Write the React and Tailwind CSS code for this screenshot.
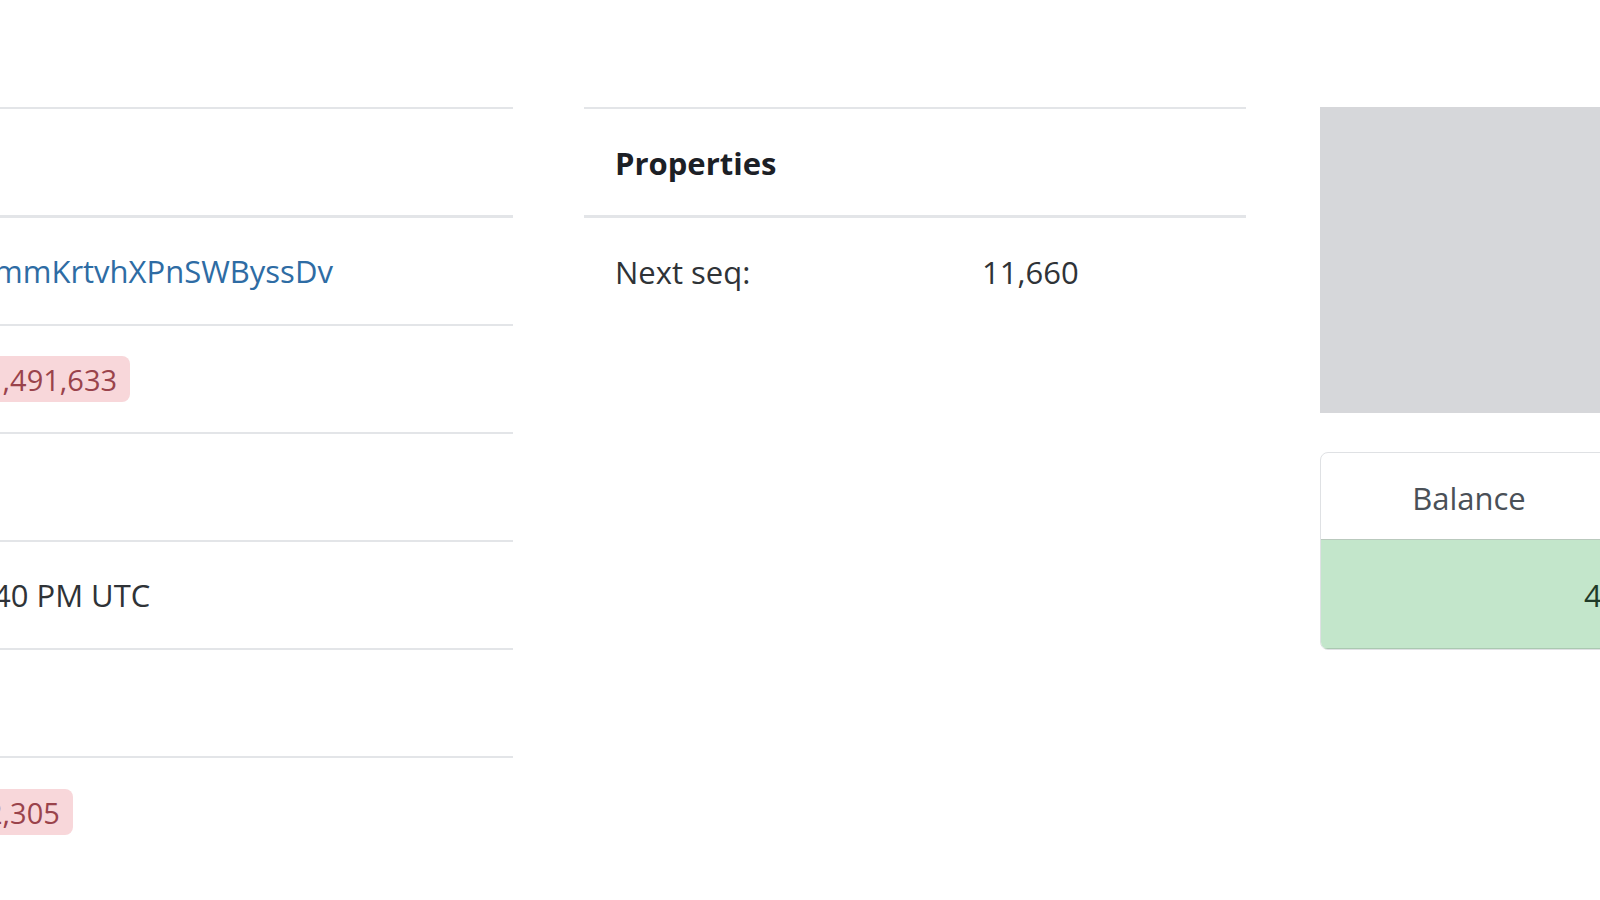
const font = { fontFamily: '"Open Sans", "Noto Sans", sans-serif' };

const Row = ({ children, last }) => (
  <div
    className={`grid grid-cols-[343px_1fr] h-[108px] items-center ${
      last ? "" : "border-b-2 border-[#e3e5e8]"
    }`}
  >
    <div />
    <div className="pl-[30px] whitespace-nowrap">{children}</div>
  </div>
);

const Badge = ({ children }) => (
  <span className="inline-flex items-center h-[46px] px-[13px] rounded-[8px] bg-[#f8d7da] text-[29px] text-[#9a434b]">
    {children}
  </span>
);

export default function App() {
  return (
    <div
      className="w-[1600px] h-[900px] overflow-hidden bg-white text-[31px] text-[#2f3337]"
      style={font}
    >
      <div className="flex items-start pt-[107px]">
        {/* account table */}
        <div className="ml-[-400px] w-[913px] shrink-0 border-t-2 border-[#e3e5e8]">
          <div className="h-[109px] border-b-[3px] border-[#e3e5e8]" />
          <Row>
            <a href="#" className="pl-[21px] text-[#2e6ca4]">
              mmKrtvhXPnSWByssDv
            </a>
          </Row>
          <Row>
            <Badge>1,491,633</Badge>
          </Row>
          <Row />
          <Row>
            <span className="pl-[20px]">40 PM UTC</span>
          </Row>
          <Row />
          <Row last>
            <Badge>2,305</Badge>
          </Row>
        </div>

        {/* properties */}
        <div className="ml-[71px] w-[662px] shrink-0 border-t-2 border-[#e3e5e8]">
          <div className="h-[109px] flex items-center pt-[2px] px-[31px] border-b-[3px] border-[#e3e5e8] font-bold text-[#1c2026]">
            Properties
          </div>
          <div className="grid grid-cols-[368px_1fr] h-[108px] items-center">
            <div className="pl-[31px]">Next seq:</div>
            <div className="pl-[30px]">11,660</div>
          </div>
        </div>

        {/* side column */}
        <div className="ml-[74px] w-[600px] shrink-0 flex flex-col">
          <div className="h-[306px] bg-[#d6d7da]" />
          <div className="mt-[39px] border border-[#dfe1e4] rounded-[8px] overflow-hidden">
            <div className="grid grid-cols-[296px_1fr] h-[87px] pt-[4px] items-center border-b border-[#b9c9bd]">
              <div className="text-center text-[#4a5057]">Balance</div>
              <div />
            </div>
            <div className="h-[109px] flex items-center pt-[3px] bg-[#c3e6cb] border-b border-[#aac8b1] pl-[263px] text-[#1f3a28]">
              4
            </div>
          </div>
        </div>
      </div>
    </div>
  );
}
